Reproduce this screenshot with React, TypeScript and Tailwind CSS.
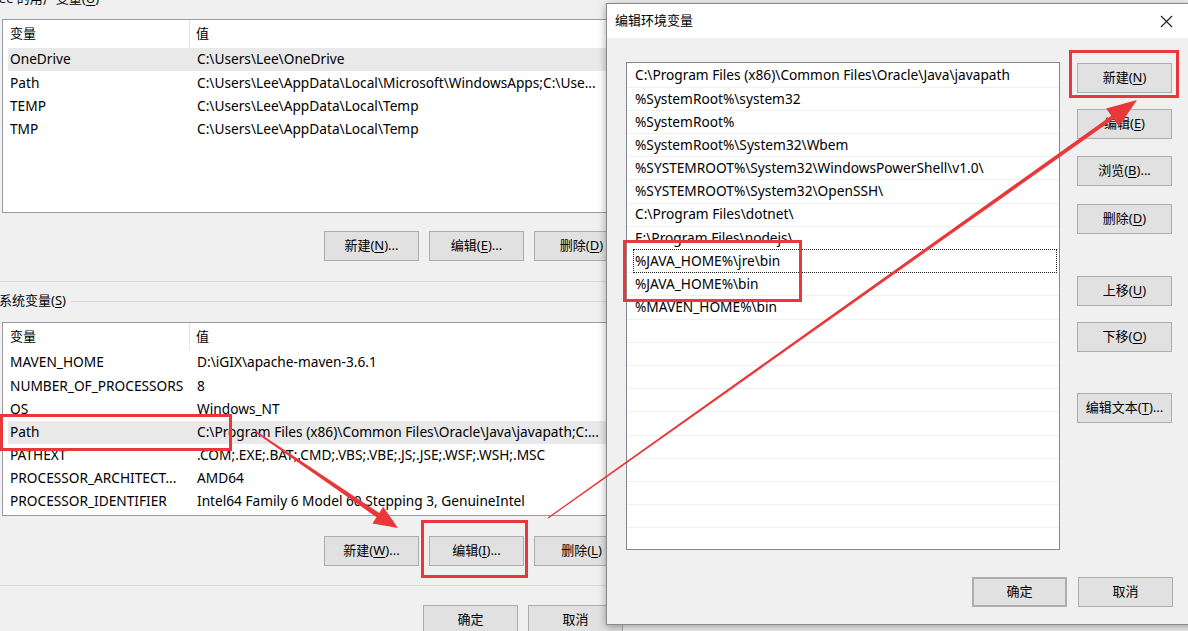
import type { ReactNode } from 'react'
import clsx from 'clsx'

type Row = { name: string; value: string }

const userVars: Row[] = [
  { name: 'OneDrive', value: 'C:\\Users\\Lee\\OneDrive' },
  { name: 'Path', value: 'C:\\Users\\Lee\\AppData\\Local\\Microsoft\\WindowsApps;C:\\Use...' },
  { name: 'TEMP', value: 'C:\\Users\\Lee\\AppData\\Local\\Temp' },
  { name: 'TMP', value: 'C:\\Users\\Lee\\AppData\\Local\\Temp' },
]

const systemVars: Row[] = [
  { name: 'MAVEN_HOME', value: 'D:\\iGIX\\apache-maven-3.6.1' },
  { name: 'NUMBER_OF_PROCESSORS', value: '8' },
  { name: 'OS', value: 'Windows_NT' },
  { name: 'Path', value: 'C:\\Program Files (x86)\\Common Files\\Oracle\\Java\\javapath;C:...' },
  { name: 'PATHEXT', value: '.COM;.EXE;.BAT;.CMD;.VBS;.VBE;.JS;.JSE;.WSF;.WSH;.MSC' },
  { name: 'PROCESSOR_ARCHITECT...', value: 'AMD64' },
  { name: 'PROCESSOR_IDENTIFIER', value: 'Intel64 Family 6 Model 60 Stepping 3, GenuineIntel' },
]

const pathEntries = [
  'C:\\Program Files (x86)\\Common Files\\Oracle\\Java\\javapath',
  '%SystemRoot%\\system32',
  '%SystemRoot%',
  '%SystemRoot%\\System32\\Wbem',
  '%SYSTEMROOT%\\System32\\WindowsPowerShell\\v1.0\\',
  '%SYSTEMROOT%\\System32\\OpenSSH\\',
  'C:\\Program Files\\dotnet\\',
  'E:\\Program Files\\nodejs\\',
  '%JAVA_HOME%\\jre\\bin',
  '%JAVA_HOME%\\bin',
  '%MAVEN_HOME%\\bin',
]

function Btn({ children, className }: { children: ReactNode; className?: string }) {
  return (
    <button
      type="button"
      className={clsx(
        'flex h-[30px] w-[95px] shrink-0 items-center justify-center border border-[#adadad] bg-[#e1e1e1] text-[13px] text-black',
        className,
      )}
    >
      {children}
    </button>
  )
}

function Key({ k }: { k: string }) {
  return <span className="underline underline-offset-2">{k}</span>
}

function VarList({ rows, selected }: { rows: Row[]; selected: number }) {
  return (
    <div className="ml-[2px] h-[194px] w-[700px] overflow-hidden border border-[#9a9aa2] bg-white">
      <div className="flex h-[28px] items-center text-[13px]">
        <div className="flex h-full w-[187px] items-center border-r border-[#e5e5e5] pl-[7px]">变量</div>
        <div className="pl-[6px]">值</div>
      </div>
      {rows.map((row, i) => (
        <div
          key={row.name + i}
          className={clsx(
            'ml-[5px] flex h-[23.2px] items-center text-[13.7px] whitespace-nowrap',
            i === selected && 'bg-[#e9e9e9]',
          )}
        >
          <div className="w-[182px] pl-[2px]">{row.name}</div>
          <div className="pl-[7px]">{row.value}</div>
        </div>
      ))}
    </div>
  )
}

function EditDialog() {
  const blanks = Array.from({ length: 10 })
  return (
    <div className="absolute top-[3px] left-[606px] flex h-[622px] w-[590px] flex-col border border-[#8a8a8a] bg-[#f0f0f0] shadow-[0_2px_8px_rgba(0,0,0,0.35)]">
      <div className="flex h-[34px] items-center justify-between bg-white pr-[22px] pl-[8px] text-[13px]">
        <span>编辑环境变量</span>
        <svg width="13" height="13" viewBox="0 0 13 13" className="mt-[1px]">
          <path d="M1 1 L12 12 M12 1 L1 12" stroke="#222" strokeWidth="1.2" />
        </svg>
      </div>

      <div className="flex pt-[24px] pl-[19px]">
        <div className="flex h-[488px] w-[434px] flex-col overflow-hidden border border-[#828790] bg-white pt-[1.5px]">
          {pathEntries.map((entry, i) => (
            <div
              key={entry}
              className="flex h-[23.2px] shrink-0 items-stretch border-b border-[#f0f0f0] text-[13.7px] whitespace-nowrap"
            >
              {i === 8 ? (
                <div className="my-[-1px] mr-[2px] ml-[6px] flex flex-1 items-center border border-dotted border-[#222] pl-[1px]">
                  {entry}
                </div>
              ) : (
                <div className="flex items-center pl-[8px]">{entry}</div>
              )}
            </div>
          ))}
          {blanks.map((_, i) => (
            <div key={i} className="h-[23.2px] shrink-0 border-b border-[#f0f0f0]" />
          ))}
        </div>

        <div className="ml-[17px] flex flex-col">
          <Btn className="mt-px">
            新建(<Key k="N" />)
          </Btn>
          <Btn className="mt-[16px]">
            编辑(<Key k="E" />)
          </Btn>
          <Btn className="mt-[17px]">
            浏览(<Key k="B" />)...
          </Btn>
          <Btn className="mt-[18px]">
            删除(<Key k="D" />)
          </Btn>
          <Btn className="mt-[42px]">
            上移(<Key k="U" />)
          </Btn>
          <Btn className="mt-[16px]">
            下移(<Key k="O" />)
          </Btn>
          <Btn className="mt-[41px]">
            编辑文本(<Key k="T" />)...
          </Btn>
        </div>
      </div>

      <div className="mt-[27px] flex gap-[11px] pl-[365px]">
        <Btn className="border-2 border-[#3c8ce0]">确定</Btn>
        <Btn>取消</Btn>
      </div>
    </div>
  )
}

export default function App() {
  return (
    <div className="relative h-[631px] w-[1188px] overflow-hidden bg-[#f0f0f0] font-['Noto_Sans','Noto_Sans_CJK_SC',sans-serif] text-black">
      {/* environment variables window behind the dialog */}
      <div className="flex w-[720px] flex-col">
        <div className="h-[19px] overflow-hidden">
          <p className="-mt-[12px] -ml-[8px] text-[13px] leading-[20px]">
            Lee 的用户变量(<Key k="U" />)
          </p>
        </div>
        <VarList rows={userVars} selected={0} />
        <div className="mt-[18px] flex gap-[10px] pl-[324px]">
          <Btn>
            新建(<Key k="N" />)...
          </Btn>
          <Btn>
            编辑(<Key k="E" />)...
          </Btn>
          <Btn>
            删除(<Key k="D" />)
          </Btn>
        </div>
        <div className="mt-[20px] border-t border-[#d9d9d9]" />
        <div className="mt-[9px] flex h-[20px] items-center">
          <span className="-ml-[1px] text-[13px]">
            系统变量(<Key k="S" />)
          </span>
          <div className="ml-[4px] flex-1 border-t border-[#d9d9d9]" />
        </div>
        <div className="mt-[11px]">
          <VarList rows={systemVars} selected={3} />
        </div>
        <div className="mt-[20px] flex gap-[10px] pl-[324px]">
          <Btn>
            新建(<Key k="W" />)...
          </Btn>
          <Btn>
            编辑(<Key k="I" />)...
          </Btn>
          <Btn>
            删除(<Key k="L" />)
          </Btn>
        </div>
        <div className="mt-[19px] border-t border-[#d9d9d9]" />
        <div className="mt-[19px] flex gap-[10px] pl-[423px]">
          <Btn>确定</Btn>
          <Btn>取消</Btn>
        </div>
      </div>

      <EditDialog />

      {/* red annotation frames */}
      <div className="pointer-events-none absolute top-[414px] left-0 h-[37px] w-[232px] border-[3px] border-[#e8383a]" />
      <div className="pointer-events-none absolute top-[520px] left-[421px] h-[58px] w-[107px] border-[3px] border-[#e8383a]" />
      <div className="pointer-events-none absolute top-[240px] left-[623px] h-[62px] w-[179px] border-[3px] border-[#e8383a]" />
      <div className="pointer-events-none absolute top-[50px] left-[1069px] h-[48px] w-[110px] border-[3px] border-[#e8383a]" />

      {/* arrows */}
      <svg className="pointer-events-none absolute inset-0" width="1188" height="631" viewBox="0 0 1188 631">
        <polygon
          fill="#e8383a"
          points="256.4,431.3 379.2,513 383.2,506.7 398,528 372.4,523.5 376.5,517.2 255.6,432.7"
        />
        <polygon
          fill="#e8383a"
          points="547.6,517.5 1111.3,115.8 1106.1,108.4 1137,100 1118.9,126.4 1113.7,119 548.4,518.5"
        />
      </svg>
    </div>
  )
}
